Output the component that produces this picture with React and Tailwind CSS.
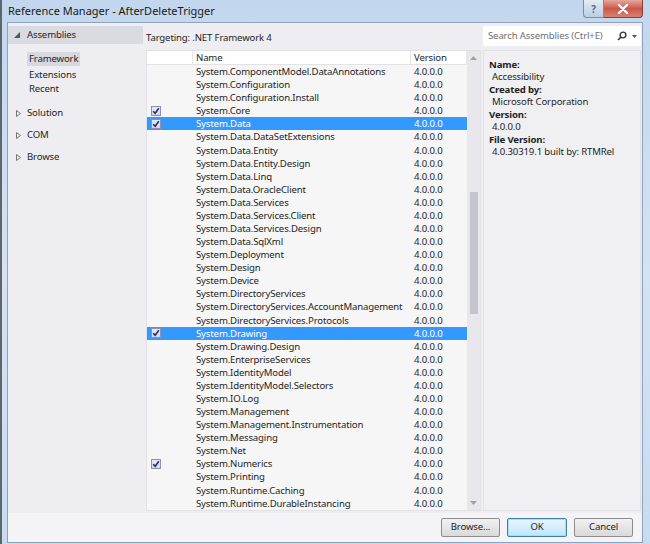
import React from "react";

const rows = [
  ["System.ComponentModel.DataAnnotations"],
  ["System.Configuration"],
  ["System.Configuration.Install"],
  ["System.Core", true],
  ["System.Data", true, true],
  ["System.Data.DataSetExtensions"],
  ["System.Data.Entity"],
  ["System.Data.Entity.Design"],
  ["System.Data.Linq"],
  ["System.Data.OracleClient"],
  ["System.Data.Services"],
  ["System.Data.Services.Client"],
  ["System.Data.Services.Design"],
  ["System.Data.SqlXml"],
  ["System.Deployment"],
  ["System.Design"],
  ["System.Device"],
  ["System.DirectoryServices"],
  ["System.DirectoryServices.AccountManagement"],
  ["System.DirectoryServices.Protocols"],
  ["System.Drawing", true, true],
  ["System.Drawing.Design"],
  ["System.EnterpriseServices"],
  ["System.IdentityModel"],
  ["System.IdentityModel.Selectors"],
  ["System.IO.Log"],
  ["System.Management"],
  ["System.Management.Instrumentation"],
  ["System.Messaging"],
  ["System.Net"],
  ["System.Numerics", true],
  ["System.Printing"],
  ["System.Runtime.Caching"],
  ["System.Runtime.DurableInstancing"],
];

function Check() {
  return (
    <div className="w-[10px] h-[10px] border border-[#8e8fb5] bg-gradient-to-b from-[#e8e8f4] to-[#d4d5e8] flex items-center justify-center">
      <svg width="8" height="8" viewBox="0 0 8 8">
        <path d="M1.2 4.2 L3.2 6.3 L6.8 1.2" fill="none" stroke="#2b2b5a" strokeWidth="1.5" />
      </svg>
    </div>
  );
}

function Row({ name, checked, selected }) {
  return (
    <div
      className={`flex items-center h-[13.08px] leading-[13px] ${selected ? "bg-[#3399ff] text-white" : "text-[#1e1e1e]"}`}
    >
      <div className="w-[46px] pl-[4px] flex items-center">{checked ? <Check /> : null}</div>
      <div className="w-[218px] pl-[3px] whitespace-nowrap">{name}</div>
      <div className="pl-[3px] whitespace-nowrap">4.0.0.0</div>
    </div>
  );
}

export default function App() {
  return (
    <div
      className="w-[650px] h-[544px] relative overflow-hidden bg-gradient-to-b from-[#c2d7ed] via-[#d3e3f3] to-[#c8dcf0] flex flex-col text-[9.6px] tracking-[-0.15px] leading-none"
      style={{ fontFamily: "'Segoe UI', 'Noto Sans', sans-serif" }}
    >
      {/* left desktop sliver */}
      <div className="absolute left-0 top-0 bottom-0 w-[2px] bg-[#5d6670]" />
      {/* title bar */}
      <div className="h-[22px] flex items-start pl-[8px] pr-[7px] shrink-0">
        <div className="pt-[5px] text-[11px] tracking-normal text-[#1a1a1a]">Reference Manager - AfterDeleteTrigger</div>
        <div className="ml-auto flex">
          <div className="w-[21px] h-[18px] rounded-bl-[4px] border border-[#7d8ea3] border-t-0 bg-gradient-to-b from-[#e3ecf6] to-[#bccde2] flex items-center justify-center text-[10px] text-[#5a6b80] font-bold">
            ?
          </div>
          <div className="w-[39px] h-[18px] rounded-br-[4px] border border-[#8b3a36] border-t-0 border-l-0 bg-gradient-to-b from-[#e5a89e] via-[#c9584a] to-[#d7816f] flex items-center justify-center">
            <svg width="12" height="10" viewBox="0 0 12 10">
              <path d="M2 1 L10 9 M10 1 L2 9" stroke="#fff" strokeWidth="2.4" strokeLinecap="round" />
            </svg>
          </div>
        </div>
      </div>
      {/* client */}
      <div className="flex-1 mx-[7px] mb-[6px] ml-[7px] border border-[#8ea3bb] bg-[#eeeef2] flex flex-col">
        <div className="flex flex-1 min-h-0">
          {/* left nav */}
          <div className="w-[135px] shrink-0 pt-[3px] text-[#1e1e1e]">
            <div className="h-[18px] bg-[#dadbe1] flex items-center pl-[6px]">
              <svg width="6" height="6" viewBox="0 0 6 6" className="mr-[7px]">
                <path d="M6 0 L6 6 L0 6 Z" fill="#555" />
              </svg>
              <span>Assemblies</span>
            </div>
            <div className="pl-[21px] pt-[8px] flex flex-col gap-[4.5px]">
              <div className="self-start bg-[#d8d9df] px-[2px] py-[2px] -ml-[2px]">Framework</div>
              <div>Extensions</div>
              <div>Recent</div>
            </div>
            <div className="flex flex-col gap-[12.5px] pt-[14.5px] pl-[8px]">
              {["Solution", "COM", "Browse"].map((t) => (
                <div key={t} className="flex items-center">
                  <svg width="5" height="7" viewBox="0 0 5 7" className="mr-[6px]">
                    <path d="M0.5 0.5 L4.5 3.5 L0.5 6.5 Z" fill="none" stroke="#777" strokeWidth="1" />
                  </svg>
                  <span>{t}</span>
                </div>
              ))}
            </div>
          </div>
          {/* middle */}
          <div className="w-[335px] shrink-0 ml-[3px] flex flex-col">
            <div className="h-[27px] flex items-center pt-[3px] text-[#1e1e1e]">Targeting: .NET Framework 4</div>
            <div className="flex-1 min-h-0 flex border border-[#e2e2e6] bg-[#f6f6f7] mb-[2px]">
              <div className="flex-1 flex flex-col min-w-0 overflow-hidden">
                <div className="h-[14px] shrink-0 flex bg-white border-b border-[#e3e3e6] text-[#1e1e1e]">
                  <div className="w-[46px] border-r border-[#e6e6e9]" />
                  <div className="w-[218px] border-r border-[#e6e6e9] pl-[3px] flex items-center">Name</div>
                  <div className="flex-1 pl-[3px] flex items-center border-r border-[#e6e6e9]">Version</div>
                </div>
                <div className="flex-1 overflow-hidden">
                  {rows.map(([n, c, s]) => (
                    <Row key={n} name={n} checked={c} selected={s} />
                  ))}
                </div>
              </div>
              {/* scrollbar */}
              <div className="w-[13px] shrink-0 bg-[#e8e8ec] flex flex-col items-center">
                <div className="h-[14px] flex items-center justify-center">
                  <svg width="7" height="4" viewBox="0 0 7 4"><path d="M0 4 L3.5 0 L7 4 Z" fill="#a0a0a8" /></svg>
                </div>
                <div className="h-[127px]" />
                <div className="w-[8px] h-[122px] bg-[#c4c5cc]" />
                <div className="flex-1" />
                <div className="h-[14px] flex items-center justify-center">
                  <svg width="7" height="4" viewBox="0 0 7 4"><path d="M0 0 L3.5 4 L7 0 Z" fill="#a0a0a8" /></svg>
                </div>
              </div>
            </div>
          </div>
          {/* right */}
          <div className="flex-1 ml-[2px] mr-[1px] flex flex-col pt-[3px]">
            <div className="h-[20px] bg-white flex items-center pl-[5px] pr-[4px] text-[#707070]">
              <span>Search Assemblies (Ctrl+E)</span>
              <svg width="10" height="10" viewBox="0 0 10 10" className="ml-auto">
                <circle cx="6" cy="4" r="2.9" fill="none" stroke="#333" strokeWidth="1.4" />
                <path d="M4 6 L1 9" stroke="#333" strokeWidth="1.6" />
              </svg>
              <svg width="5" height="3" viewBox="0 0 5 3" className="ml-[5px]"><path d="M0 0 L5 0 L2.5 3 Z" fill="#555" /></svg>
            </div>
            <div className="flex-1 mt-[4px] mb-[2px] border border-[#e2e2e6] bg-[#f0f0f3] pl-[5px] pt-[8px] text-[#1e1e1e] flex flex-col leading-[12.45px]">
              <div className="font-bold">Name:</div>
              <div className="pl-[3px]">Accessibility</div>
              <div className="font-bold">Created by:</div>
              <div className="pl-[3px]">Microsoft Corporation</div>
              <div className="font-bold">Version:</div>
              <div className="pl-[3px]">4.0.0.0</div>
              <div className="font-bold">File Version:</div>
              <div className="pl-[3px]">4.0.30319.1 built by: RTMRel</div>
            </div>
          </div>
        </div>
        {/* bottom buttons */}
        <div className="h-[29px] shrink-0 bg-[#f4f4f6] flex items-center justify-end gap-[7px] pr-[9px] text-[#1e1e1e]">
          <div className="w-[59px] h-[19px] border border-[#8d8d8d] rounded-[2px] bg-gradient-to-b from-[#f2f2f2] to-[#d9d9d9] flex items-center justify-center">Browse...</div>
          <div className="w-[60px] h-[19px] border border-[#3c7fb1] rounded-[2px] bg-gradient-to-b from-[#eaf6fd] to-[#bee6fd] flex items-center justify-center shadow-[inset_0_0_0_1px_#a6dcf8]">OK</div>
          <div className="w-[59px] h-[19px] border border-[#8d8d8d] rounded-[2px] bg-gradient-to-b from-[#f2f2f2] to-[#d9d9d9] flex items-center justify-center">Cancel</div>
        </div>
      </div>
    </div>
  );
}
